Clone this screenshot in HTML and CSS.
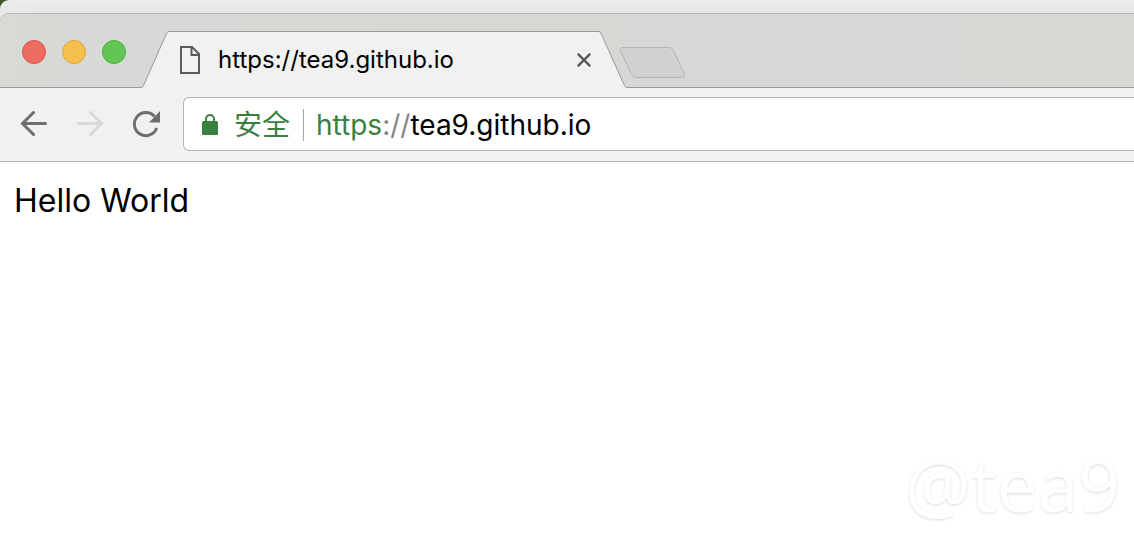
FILE: index.html
```html
<!DOCTYPE html>
<html lang="zh-CN">
<head>
<meta charset="utf-8">
<meta name="viewport" content="width=device-width, initial-scale=1">
<title>https://tea9.github.io</title>
<link rel="stylesheet" href="styles.css">
</head>
<body>
<div class="backdrop">
  <div class="back-window"></div>
</div>
<div class="window">
  <header class="tab-strip">
    <div class="lights">
      <button class="light light-close" aria-label="Close window"></button>
      <button class="light light-minimize" aria-label="Minimize window"></button>
      <button class="light light-zoom" aria-label="Zoom window"></button>
    </div>
    <div class="tab">
      <svg class="slope" viewBox="0 0 28 57" aria-hidden="true">
        <path class="slope-fill" d="M0 57V56.5Q1.500 56.500 2.500 54.500L25.500 2.500Q26.500 .5 28 .5V57Z"/>
        <path class="slope-line" d="M0 56.5Q1.500 56.500 2.500 54.500L25.500 2.500Q26.500 .5 28 .5"/>
      </svg>
      <div class="tab-body">
        <svg class="page-icon" viewBox="0 0 20 28" aria-hidden="true">
          <path d="M1 1H12L19 8V27H1ZM11.500 1V9H19"/>
        </svg>
        <span class="tab-title">https://tea9.github.io</span>
        <button class="tab-close" aria-label="Close tab">
          <svg class="close-icon" viewBox="0 0 14 14"><path d="M.8 .8L13.200 13.200M13.200 .8L.8 13.200"/></svg>
        </button>
      </div>
      <svg class="slope slope-right" viewBox="0 0 28 57" aria-hidden="true">
        <path class="slope-fill" d="M0 57V56.5Q1.500 56.500 2.500 54.500L26 2.500Q27 .5 28 .5V57Z"/>
        <path class="slope-line" d="M0 56.500Q1.500 56.500 2.500 54.500L26 2.500Q27 .5 28 .5"/>
      </svg>
    </div>
    <button class="new-tab" aria-label="New tab">
      <svg class="new-tab-shape" viewBox="0 0 68 32"><path d="M4 .5H50Q53 .5 54.500 3.500L65.500 27.500Q66.500 30.500 63.500 30.500H17Q14 30.500 12.500 27.500L1.500 4Q.5 .5 4 .5Z"/></svg>
    </button>
  </header>
  <nav class="toolbar">
    <button class="nav-button" aria-label="Back">
      <svg class="arrow" viewBox="0 0 28 26"><path d="M25.500 12.500H2.500M13.500 1.500L2.500 12.500L13.500 23.500"/></svg>
    </button>
    <button class="nav-button nav-disabled" aria-label="Forward" disabled>
      <svg class="arrow" viewBox="0 0 28 26"><path d="M2.500 12.500H25.500M14.500 1.500L25.500 12.500L14.500 23.500"/></svg>
    </button>
    <button class="nav-button" aria-label="Reload">
      <svg class="reload" viewBox="0 0 28 28">
        <path class="reload-arc" d="M24.700 18A11.500 11.500 0 1 1 22.500 6.500"/>
        <path class="reload-head" d="M28 1V12.500H17Z"/>
      </svg>
    </button>
    <form class="omnibox">
      <svg class="lock" viewBox="0 0 16 22" aria-hidden="true">
        <rect x="0" y="8" width="16" height="14" rx="1.500"/>
        <path d="M4 9V6A4 4 0 0 1 12 6V9"/>
      </svg>
      <span class="secure">安全</span>
      <label class="scheme" for="address">https<span class="scheme-mark">://</span></label>
      <input class="address" id="address" type="text" value="tea9.github.io" spellcheck="false">
    </form>
  </nav>
  <main class="page">
    <p class="greeting">Hello World</p>
    <div class="watermark">@tea9</div>
  </main>
</div>
</body>
</html>
```
FILE: styles.css
```css
* {
  box-sizing: border-box;
}

body {
  margin: 0;
  min-height: 100vh;
  display: flex;
  flex-direction: column;
  background: #fff;
  color: #000;
  font-family: Inter, "Noto Sans CJK SC", sans-serif;
}

button {
  padding: 0;
  border: 0;
  background: none;
}

svg {
  display: block;
  fill: none;
}

.backdrop {
  background: #3d5a2c;
}

.back-window {
  height: 13px;
  border-top-left-radius: 9px;
  background: linear-gradient(#ededed, #e6e6e6);
}

.window {
  flex: 1;
  display: flex;
  flex-direction: column;
  background: #e6e6e6;
}

.tab-strip {
  display: flex;
  height: 75px;
  padding-left: 22px;
  border-top: 1px solid #b5b6b5;
  border-top-left-radius: 9px;
  background: linear-gradient(90deg, #d8dad6, #d6d9d6 15%, #d7d8d2 40%, #d5d8d5 60%, #d7d9d5);
  box-shadow: inset 0 -1px #979897;
}

.lights {
  display: flex;
  gap: 16px;
  padding-top: 26px;
  margin-right: 15px;
}

.light {
  width: 24px;
  height: 24px;
  border: 1px solid;
  border-radius: 50%;
}

.light-close {
  background: #ee6b60;
  border-color: #d9534b;
}

.light-minimize {
  background: #f6c04f;
  border-color: #dca43c;
}

.light-zoom {
  background: #61c654;
  border-color: #4cac40;
}

.tab {
  display: flex;
  align-self: flex-end;
  width: 486px;
  height: 57px;
}

.slope {
  flex: none;
  width: 28px;
  height: 57px;
}

.slope-right {
  transform: scaleX(-1);
}

.slope-fill {
  fill: #f1f1f1;
}

.slope-line {
  stroke: #979897;
}

.tab-body {
  flex: 1;
  display: flex;
  align-items: center;
  padding: 0 8px 0 11px;
  border-top: 1px solid #979897;
  background: #f1f1f1;
}

.page-icon {
  width: 20px;
  height: 28px;
  stroke: #5a5a5a;
  stroke-width: 2;
}

.tab-title {
  flex: 1;
  margin-left: 18px;
  font-size: 24px;
  line-height: 32px;
}

.close-icon {
  width: 14px;
  height: 14px;
  stroke: #5a5a5a;
  stroke-width: 2.4;
}

.new-tab {
  align-self: flex-start;
  margin: 33px 0 0 -8px;
}

.new-tab-shape {
  width: 68px;
  height: 32px;
  fill: #d1d1d1;
  stroke: #b3b5b3;
}

.toolbar {
  display: flex;
  align-items: center;
  gap: 28px;
  height: 74px;
  padding: 0 0 2px 20px;
  border-bottom: 1px solid #b3b3b3;
  background: #f1f1f1;
}

.nav-button {
  flex: none;
  color: #6e6e6e;
}

.nav-disabled {
  color: #d8d8d8;
}

.arrow {
  width: 28px;
  height: 26px;
  stroke: currentColor;
  stroke-width: 3;
  stroke-linecap: round;
}

.reload {
  width: 28px;
  height: 28px;
}

.reload-arc {
  stroke: currentColor;
  stroke-width: 3;
}

.reload-head {
  fill: currentColor;
}

.omnibox {
  flex: 1;
  display: flex;
  align-items: center;
  min-width: 0;
  height: 54px;
  margin-left: -5px;
  padding: 2px 0 0 18px;
  border: 1px solid #b5b5b5;
  border-right: 0;
  border-radius: 6px 0 0 6px;
  background: #fff;
  font-size: 28px;
  line-height: 32px;
}

.lock {
  width: 16px;
  height: 22px;
  margin-bottom: 2px;
  fill: #3b7f3f;
}

.lock path {
  fill: none;
  stroke: #3b7f3f;
  stroke-width: 2;
}

.secure {
  margin-left: 16px;
  padding-right: 13px;
  border-right: 1px solid #a6a6a6;
  color: #3b7f3f;
  white-space: nowrap;
}

.scheme {
  margin-left: 12px;
  color: #3b7f3f;
}

.scheme-mark {
  color: #858585;
}

.address {
  flex: 1;
  min-width: 0;
  height: 40px;
  padding: 0;
  border: 0;
  outline: 0;
  background: none;
  color: #000;
  font: inherit;
}

.page {
  flex: 1;
  display: flex;
  flex-direction: column;
  justify-content: space-between;
  padding: 19px 14px 16px;
  background: #fff;
}

.greeting {
  margin: 0;
  font-size: 32px;
  line-height: 40px;
}

.watermark {
  align-self: flex-end;
  color: #fff;
  font-family: "Open Sans", sans-serif;
  font-size: 73px;
  line-height: 88px;
  text-shadow: 0 1px 3px rgba(0, 0, 0, 0.14);
}
```
